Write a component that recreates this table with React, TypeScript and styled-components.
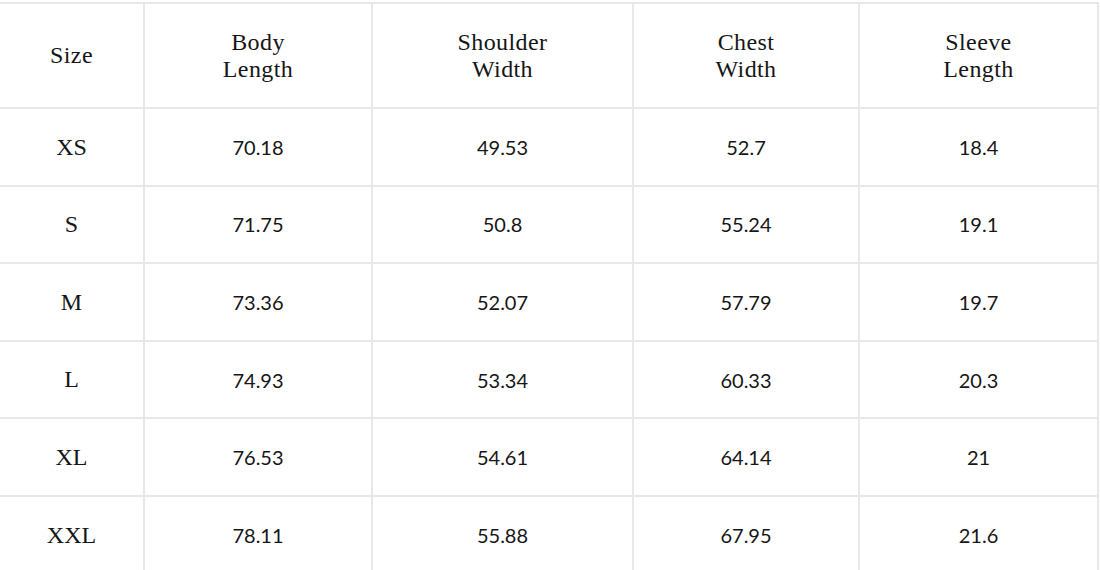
import * as React from 'react';
import styled, { createGlobalStyle } from 'styled-components';

const GlobalStyle = createGlobalStyle`
  html, body {
    margin: 0;
    padding: 0;
    background: #fff;
  }
`;

const columns = ['Size', 'Body\nLength', 'Shoulder\nWidth', 'Chest\nWidth', 'Sleeve\nLength'];

const rows: [string, string, string, string, string][] = [
  ['XS', '70.18', '49.53', '52.7', '18.4'],
  ['S', '71.75', '50.8', '55.24', '19.1'],
  ['M', '73.36', '52.07', '57.79', '19.7'],
  ['L', '74.93', '53.34', '60.33', '20.3'],
  ['XL', '76.53', '54.61', '64.14', '21'],
  ['XXL', '78.11', '55.88', '67.95', '21.6'],
];

const Grid = styled.div`
  margin-top: 2px;
  display: grid;
  grid-template-columns: 143px 226px 259px 224px 237px;
  grid-template-rows: 103px repeat(6, 75.6px);
  gap: 2px;
  padding: 2px 2px 0 0;
  background: #e8e8e8;
  width: 1099px;
  box-sizing: border-box;
`;

const Cell = styled.div<{ serif?: boolean }>`
  background: #fff;
  display: flex;
  align-items: center;
  justify-content: center;
  text-align: center;
  color: #161616;
  font-family: ${p => (p.serif ? '"Liberation Serif", "Times New Roman", serif' : 'Lato, "Open Sans", sans-serif')};
  font-size: ${p => (p.serif ? '24px' : '20px')};
  line-height: ${p => (p.serif ? '26.5px' : '24px')};
  white-space: pre-line;
`;

const HeadCell = styled(Cell)`
  letter-spacing: 0.4px;
`;

export default function App() {
  return (
    <>
      <GlobalStyle />
      <Grid>
        {columns.map(c => (
          <HeadCell serif key={c}>
            {c}
          </HeadCell>
        ))}
        {rows.map(r =>
          r.map((v, i) => (
            <Cell serif={i === 0} key={r[0] + i}>
              {v}
            </Cell>
          ))
        )}
      </Grid>
    </>
  );
}
